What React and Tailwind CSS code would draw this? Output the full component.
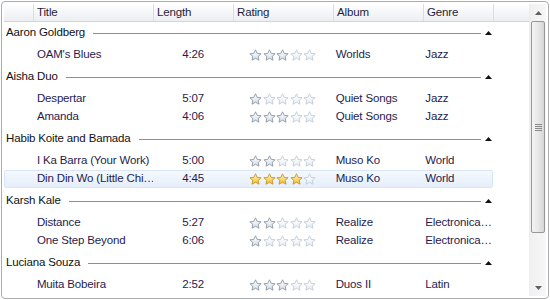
import React from "react";

const groups = [
  { name: "Aaron Goldberg", items: [["OAM's Blues", "4:26", 3, "Worlds", "Jazz"]] },
  { name: "Aisha Duo", items: [["Despertar", "5:07", 1, "Quiet Songs", "Jazz"], ["Amanda", "4:06", 3, "Quiet Songs", "Jazz"]] },
  { name: "Habib Koite and Bamada", items: [["I Ka Barra (Your Work)", "5:00", 2, "Muso Ko", "World"], ["Din Din Wo (Little Chi…", "4:45", 4, "Muso Ko", "World", true]] },
  { name: "Karsh Kale", items: [["Distance", "5:27", 2, "Realize", "Electronica…"], ["One Step Beyond", "6:06", 1, "Realize", "Electronica…"]] },
  { name: "Luciana Souza", items: [["Muita Bobeira", "2:52", 3, "Duos II", "Latin"]] },
];

const STAR = "M6.5 0.8 L8.2 4.4 L12.1 4.8 L9.2 7.4 L10 11.2 L6.5 9.2 L3 11.2 L3.8 7.4 L0.9 4.8 L4.8 4.4 Z";

function Star({ kind }) {
  const id = kind;
  return (
    <svg width="13" height="12" viewBox="0 0 13 12" className="shrink-0">
      <defs>
        <linearGradient id={"g-gold"} x1="0" y1="0" x2="0" y2="1">
          <stop offset="0" stopColor="#fff8c4" />
          <stop offset="1" stopColor="#f3bb2c" />
        </linearGradient>
        <linearGradient id={"g-on"} x1="0" y1="0" x2="0" y2="1">
          <stop offset="0" stopColor="#ffffff" />
          <stop offset="1" stopColor="#d5dde8" />
        </linearGradient>
        <linearGradient id={"g-off"} x1="0" y1="0" x2="0" y2="1">
          <stop offset="0" stopColor="#ffffff" />
          <stop offset="1" stopColor="#e8eef6" />
        </linearGradient>
      </defs>
      <path
        d={STAR}
        fill={`url(#g-${id})`}
        stroke={id === "gold" ? "#c99424" : id === "on" ? "#8c97a6" : "#c3cbd6"}
        strokeWidth="0.9"
        strokeLinejoin="round"
      />
    </svg>
  );
}

function Stars({ n, gold }) {
  return (
    <div className="flex justify-center gap-[0.5px]">
      {[0, 1, 2, 3, 4].map((i) => (
        <Star key={i} kind={i < n ? (gold ? "gold" : "on") : "off"} />
      ))}
    </div>
  );
}

function HeaderCell({ w, children }) {
  return (
    <div className={`${w} h-full flex items-center border-r border-[#dcdcdc] pl-[3px]`}>{children}</div>
  );
}

export default function App() {
  return (
    <div
      className="w-[550px] h-[300px] bg-white p-[1px] text-[11.5px] tracking-[-0.15px]"
      style={{ fontFamily: '"Liberation Sans", Arial, sans-serif' }}
    >
      <div className="w-full h-full border border-[#a9acb0] rounded-[4px] flex overflow-hidden bg-white p-[2px]">
        <div className="flex-1 flex flex-col min-w-0 overflow-hidden">
          <div className="h-[18px] flex text-[#1e1e3a] bg-gradient-to-b from-white to-[#eceef1] border-b border-[#d5d5d5] shrink-0">
            <HeaderCell w="w-[30px]"></HeaderCell>
            <HeaderCell w="w-[120px]">Title</HeaderCell>
            <HeaderCell w="w-[80px]">Length</HeaderCell>
            <HeaderCell w="w-[100px]">Rating</HeaderCell>
            <HeaderCell w="w-[90px]">Album</HeaderCell>
            <HeaderCell w="w-[70px]">Genre</HeaderCell>
            <div className="flex-1" />
          </div>
          <div className="flex flex-col">
            {groups.map((g) => (
              <div key={g.name} className="pb-[2px]">
                <div className="h-[24px] flex items-center pb-[2px] pl-[2px] w-[490px]">
                  <span className="text-[#111] whitespace-nowrap">{g.name}</span>
                  <div className="flex-1 h-px bg-[#8e8e8e] ml-[8px] mr-[4px]" />
                  <svg width="7" height="4" viewBox="0 0 7 4" className="mr-[2px]">
                    <path d="M0 4 L3.5 0 L7 4 Z" fill="#111" />
                  </svg>
                </div>
                {g.items.map((it) => (
                  <div
                    key={it[0]}
                    className={`h-[18px] w-[489px] flex items-center text-[#1f1c4e] rounded-[2px] border ${
                      it[5]
                        ? "border-[#d7e5f6] bg-gradient-to-b from-[#f5f9fe] to-[#e5eefa]"
                        : "border-transparent"
                    }`}
                  >
                    <div className="w-[29px]" />
                    <div className="w-[120px] pl-[3px] whitespace-nowrap overflow-hidden">{it[0]}</div>
                    <div className="w-[80px] text-center">{it[1]}</div>
                    <div className="w-[100px]"><Stars n={it[2]} gold={it[5]} /></div>
                    <div className="w-[90px] pl-[3px] whitespace-nowrap">{it[3]}</div>
                    <div className="w-[70px] pl-[3px] whitespace-nowrap">{it[4]}</div>
                  </div>
                ))}
              </div>
            ))}
          </div>
        </div>
        <div className="w-[17px] shrink-0 flex flex-col bg-gradient-to-r from-[#f0f0f0] to-[#f7f7f7] border-l border-[#ececec]">
          <div className="h-[17px] flex items-center justify-center">
            <svg width="7" height="4" viewBox="0 0 7 4"><path d="M0 4 L3.5 0 L7 4 Z" fill="#606060" /></svg>
          </div>
          <div className="h-[212px] mx-[1px] rounded-[2px] border border-[#979797] bg-gradient-to-r from-[#f3f3f3] via-[#e8e8e8] to-[#d6d6d6] flex items-center justify-center">
            <div className="flex flex-col gap-[1px]">
              <div className="w-[7px] h-px bg-[#8a8a8a]" />
              <div className="w-[7px] h-px bg-[#8a8a8a]" />
              <div className="w-[7px] h-px bg-[#8a8a8a]" />
              <div className="w-[7px] h-px bg-[#8a8a8a]" />
            </div>
          </div>
          <div className="flex-1" />
          <div className="h-[17px] flex items-center justify-center">
            <svg width="7" height="4" viewBox="0 0 7 4"><path d="M0 0 L3.5 4 L7 0 Z" fill="#606060" /></svg>
          </div>
        </div>
      </div>
    </div>
  );
}
